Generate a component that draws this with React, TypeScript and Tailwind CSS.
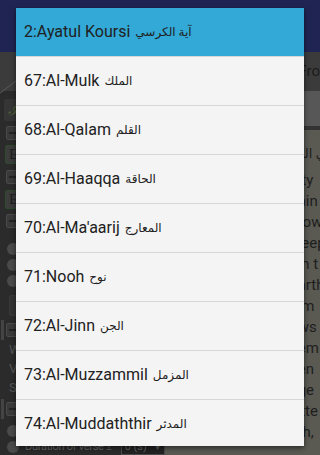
import { ReactNode } from 'react';

const surahs = [
  { name: '2:Ayatul Koursi', ar: 'آية الكرسي' },
  { name: '67:Al-Mulk', ar: 'الملك' },
  { name: '68:Al-Qalam', ar: 'القلم' },
  { name: '69:Al-Haaqqa', ar: 'الحاقة' },
  { name: "70:Al-Ma'aarij", ar: 'المعارج' },
  { name: '71:Nooh', ar: 'نوح' },
  { name: '72:Al-Jinn', ar: 'الجن' },
  { name: '73:Al-Muzzammil', ar: 'المزمل' },
  { name: '74:Al-Muddaththir', ar: 'المدثر' },
];

// ends of the reading pane lines that show past the dialog
const readingLines = ['ity', 'ain', 'row', 'leep', 'in t', 'arth', 'im', 'ws', 'em', 'en', 'ge', 'xte', 'th,'];

function Collapse({ bar }: { bar?: boolean }) {
  return (
    <div className="flex h-[20px] items-center">
      <div className={`h-full w-[3px] ${bar ? 'bg-[#444]' : 'bg-transparent'}`} />
      <div className="ml-[2px] flex h-[14px] w-[14px] items-center justify-center rounded-[2px] border border-[#4a4a4a] bg-[#3a3a3a]">
        <div className="h-[2px] w-[8px] bg-[#232323]" />
      </div>
    </div>
  );
}

function EButton() {
  return (
    <div className="ml-[4px] flex h-[19px] w-[60px] items-center rounded-[2px] border border-[#2d4a2d] bg-[#3c3c3c] pl-[3px] font-['Liberation_Serif',serif] text-[15px] leading-none text-[#1c1c1c]">
      E
    </div>
  );
}

function Radio({ children }: { children?: ReactNode }) {
  return (
    <div className="flex h-[16px] items-center">
      <div className="ml-[6px] h-[12px] w-[12px] rounded-full bg-[#4a4a4a]" />
      {children}
    </div>
  );
}

function App() {
  return (
    <div className="relative h-[455px] w-[320px] overflow-hidden bg-[#2b2b2b] font-['Roboto','DejaVu_Sans',sans-serif]">
      {/* app behind the dialog, already dimmed */}
      <div className="flex h-full flex-col">
        <div className="h-[56px] bg-[#1f2452]" />
        <div className="flex h-[42px] items-center bg-[#3b3b3b]">
          <div className="relative h-full w-[305px]">
            <svg className="absolute left-0 top-0" width="60" height="42" viewBox="0 0 60 42">
              <path d="M0 41 L28 20 L60 20" fill="none" stroke="#525252" strokeWidth="1.2" />
            </svg>
          </div>
          <span className="text-[15px] text-[#1c1c1c]">Fro</span>
        </div>
        <div className="flex flex-1">
          <div className="flex w-[172px] flex-col bg-[#2b2b2b] pt-[8px] pl-[1px]">
            <div className="ml-[3px] flex h-[22px] w-[40px] items-center rounded-[2px] bg-[#353535] pl-[4px] font-['Liberation_Serif',serif] text-[16px] italic text-[#4f6236]">
              ℐ
            </div>
            <div className="mt-[2px]">
              <Collapse />
            </div>
            <div className="mt-[2px]">
              <EButton />
            </div>
            <div className="mt-[3px]">
              <Collapse />
            </div>
            <div className="mt-[3px]">
              <EButton />
            </div>
            <div className="mt-[2px]">
              <Collapse />
            </div>
            <div className="mt-[10px] flex flex-col">
              <Radio />
              <Radio />
              <Radio />
            </div>
            <div className="ml-[8px] mt-[6px] h-[21px] w-[120px] rounded-[2px] border border-[#3a3a3a] bg-[#333]" />
            <div className="mt-[4px]">
              <Collapse bar />
            </div>
            <div className="flex flex-col pl-[8px] text-[13px] leading-[19px] text-[#555]">
              <span>W</span>
              <span>V</span>
              <span>S</span>
            </div>
            <div className="mt-[2px]">
              <Collapse bar />
            </div>
            <div className="mt-[4px]">
              <Radio />
            </div>
            <Radio>
              <span className="ml-[6px] whitespace-nowrap text-[11px] tracking-tight text-[#6a6a6a]">Duration of verse ±</span>
              <div className="ml-[9px] flex h-[16px] w-[44px] items-center justify-between border border-[#4a4a4a] bg-[#222] px-[3px] text-[11px] text-[#666]">
                <span>0 (s)</span>
                <span className="text-[8px]">▼</span>
              </div>
            </Radio>
          </div>
          <div className="flex flex-1 flex-col">
            <div className="h-[35px] bg-[#575757]" />
            <div className="h-[4px] bg-[#333]" />
            <div className="flex-1 bg-[#5a5a53] pl-[133px] pt-[13px] text-[15px] text-[#1e1e1e]">
              <div className="flex h-[21px] items-center whitespace-nowrap">
                <span dir="rtl" className="text-[13px]">ي الرَّ</span>
              </div>
              <div className="mt-[6px]">
                {readingLines.map((line) => (
                  <div key={line} className="h-[21px] whitespace-nowrap leading-[21px]">
                    {line}
                  </div>
                ))}
              </div>
            </div>
          </div>
        </div>
      </div>

      {/* surah picker dialog */}
      <div className="absolute left-4 top-2 h-[438px] w-[288px] overflow-hidden bg-[#f4f4f4] shadow-[0_2px_5px_rgba(0,0,0,0.55)]">
        {surahs.map((s, i) => (
          <div
            key={s.name}
            className={`flex h-[49px] items-center gap-[5px] border-b border-[#d6d6d6] px-2 text-[#212121] ${
              i === 0 ? 'bg-[#32a9d7]' : ''
            }`}
          >
            <span className="text-[16px]">{s.name}</span>
            <span className="text-[12px]">{s.ar}</span>
          </div>
        ))}
      </div>
    </div>
  );
}

export default App;
